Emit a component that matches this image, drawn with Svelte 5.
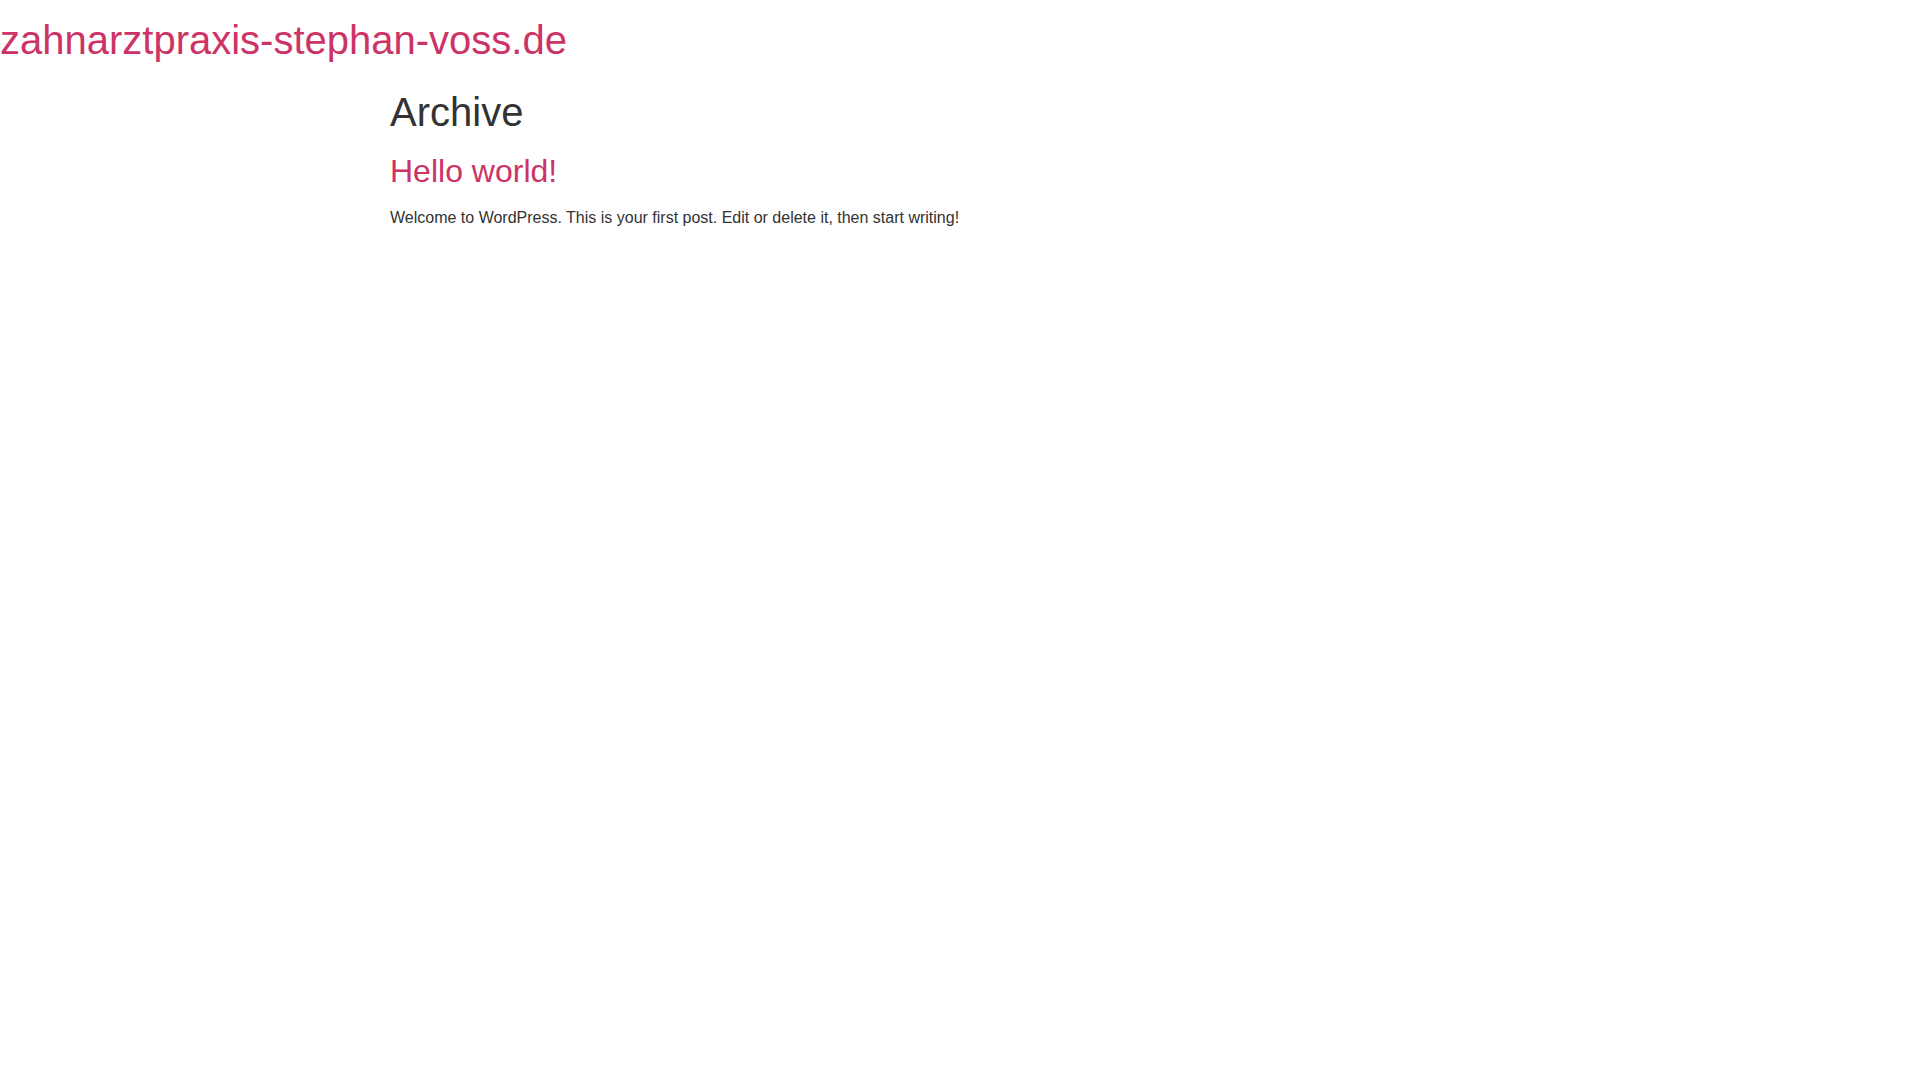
<script>
  const site = {
    title: 'zahnarztpraxis-stephan-voss.de',
    url: '/'
  };

  const posts = [
    {
      title: 'Hello world!',
      url: '/hello-world/',
      excerpt: 'Welcome to WordPress. This is your first post. Edit or delete it, then start writing!'
    }
  ];
</script>

<header class="site-header">
  <h1><a href={site.url}>{site.title}</a></h1>
</header>

<main class="site-main">
  <header class="page-header">
    <h1>Archive</h1>
  </header>

  <div class="page-content">
    {#each posts as post}
      <article class="post">
        <h2><a href={post.url}>{post.title}</a></h2>
        <p>{post.excerpt}</p>
      </article>
    {/each}
  </div>
</main>

<style>
  :global(body) {
    margin: 0;
    background: #fff;
    color: #333;
    font-family: "Liberation Sans", Arial, sans-serif;
    font-size: 16px;
    line-height: 24px;
  }

  .site-main {
    max-width: 1140px;
    margin: 24px auto 0;
  }

  h1,
  h2 {
    margin: 16px 0;
    font-weight: 500;
  }

  h1 {
    font-size: 40px;
    line-height: 48px;
  }

  h2 {
    font-size: 32px;
    line-height: 38px;
  }

  p {
    margin: 0 0 14px;
  }

  a {
    color: #c36;
    text-decoration: none;
  }

  a:hover {
    color: #336;
  }
</style>
